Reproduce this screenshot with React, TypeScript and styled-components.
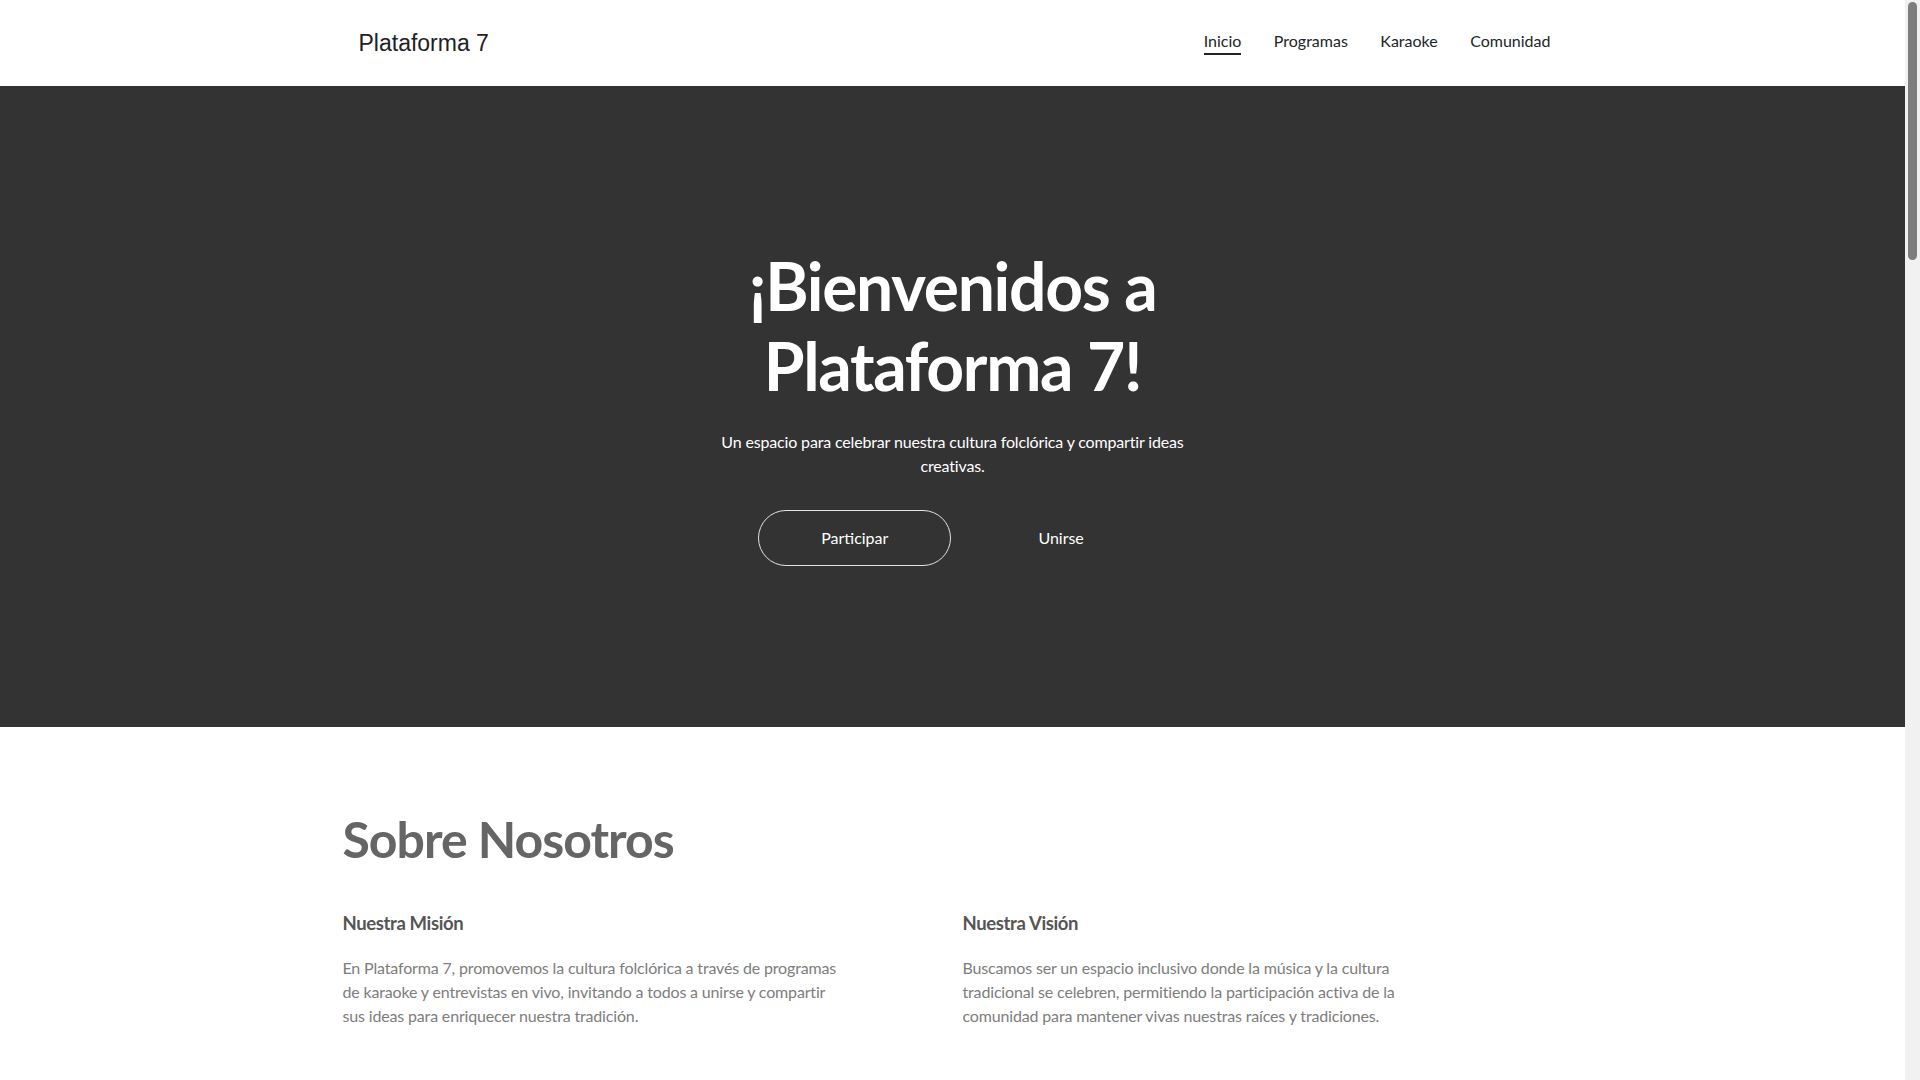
import React from "react";
import styled, { createGlobalStyle } from "styled-components";

const GlobalStyle = createGlobalStyle`
  *, *::before, *::after {
    box-sizing: border-box;
  }
  html {
    background: #f1f1f1;
  }
  body {
    margin: 0 15px 0 0;
    font-family: Lato, "Noto Sans", sans-serif;
    color: #212529;
    background: #fff;
  }
`;

// stands in for the browser scrollbar thumb seen in the reference
const ScrollThumb = styled.div`
  position: fixed;
  top: 2px;
  right: 3px;
  width: 9px;
  height: 258px;
  border-radius: 5px;
  background: #7d7d7d;
`;

const Header = styled.header`
  height: 86px;
  background: #fff;
`;

const NavBar = styled.nav`
  max-width: 1220px;
  height: 100%;
  margin: 0 auto;
  padding: 0 12px 0 16px;
  display: flex;
  align-items: center;
  justify-content: space-between;
`;

const Brand = styled.a`
  font-family: "Liberation Sans", Arial, sans-serif;
  font-size: 23px;
  color: #1d2125;
  text-decoration: none;
`;

const NavList = styled.ul`
  display: flex;
  gap: 32.5px;
  list-style: none;
  margin: 0;
  padding: 0;
`;

const NavLink = styled.a<{ $active?: boolean }>`
  display: block;
  font-size: 16px;
  line-height: 20px;
  padding-bottom: 2px;
  color: #212529;
  text-decoration: none;
  border-bottom: 2px solid ${(p) => (p.$active ? "#212529" : "transparent")};
`;

const Hero = styled.section`
  background: #333333;
  padding: 160px 24px 161px;
  display: flex;
  justify-content: center;
  color: #fff;
  text-align: center;
`;

const HeroInner = styled.div`
  max-width: 500px;
`;

const HeroTitle = styled.h1`
  margin: 0;
  font-size: 66px;
  line-height: 80px;
  font-weight: 700;
  letter-spacing: -0.02em;
`;

const HeroText = styled.p`
  margin: 24px 0 0;
  font-size: 16px;
  line-height: 24px;
  letter-spacing: -0.01em;
`;

const Actions = styled.div`
  display: flex;
  justify-content: center;
  gap: 24px;
  margin-top: 32px;
`;

const HeroButton = styled.a<{ $outline?: boolean }>`
  padding: 15px 62px;
  border: 1px solid ${(p) => (p.$outline ? "#e4e4e4" : "transparent")};
  border-radius: 999px;
  font-size: 16px;
  line-height: 24px;
  color: #fff;
  text-decoration: none;
`;

const Section = styled.section<{ $tone?: string }>`
  padding: 82px 0 80px;
  background: ${(p) => p.$tone || "#fff"};
`;

const Container = styled.div`
  max-width: 1220px;
  margin: 0 auto;
`;

const SectionTitle = styled.h2`
  margin: 0 0 42px;
  font-size: 50px;
  line-height: 60px;
  font-weight: 700;
  letter-spacing: -0.02em;
  color: #656565;
`;

const Columns = styled.div<{ $count?: number }>`
  display: grid;
  grid-template-columns: repeat(${(p) => p.$count || 2}, 1fr);
  gap: 20px;
`;

const ColTitle = styled.h3`
  margin: 0 0 21px;
  font-size: 18.5px;
  line-height: 24px;
  font-weight: 700;
  letter-spacing: -0.02em;
  color: #555;
`;

const ColText = styled.p`
  margin: 0;
  max-width: 498px;
  font-size: 16px;
  line-height: 24px;
  letter-spacing: -0.01em;
  color: #7d7d7d;
`;

const Card = styled.article`
  min-height: 420px;
  padding: 32px;
  border: 1px solid #e5e5e5;
  border-radius: 8px;
`;

const Footer = styled.footer`
  padding: 48px 0;
  background: #333333;
  color: #cfcfcf;
  text-align: center;
  font-size: 14px;
`;

const navItems = ["Inicio", "Programas", "Karaoke", "Comunidad"];

const programas = [
  {
    title: "Entrevistas en vivo",
    text: "Conversaciones con artistas, músicos y portadores de nuestra tradición folclórica.",
  },
  {
    title: "Noches de música",
    text: "Transmisiones semanales con repertorio tradicional y nuevas interpretaciones.",
  },
  {
    title: "Talleres creativos",
    text: "Espacios para aprender, compartir ideas y crear junto a la comunidad.",
  },
];

export default function App() {
  return (
    <>
      <GlobalStyle />
      <ScrollThumb />
      <Header>
        <NavBar>
          <Brand href="#">Plataforma 7</Brand>
          <NavList>
            {navItems.map((item, i) => (
              <li key={item}>
                <NavLink href="#" $active={i === 0}>
                  {item}
                </NavLink>
              </li>
            ))}
          </NavList>
        </NavBar>
      </Header>

      <Hero>
        <HeroInner>
          <HeroTitle>¡Bienvenidos a Plataforma 7!</HeroTitle>
          <HeroText>
            Un espacio para celebrar nuestra cultura folclórica y compartir ideas
            creativas.
          </HeroText>
          <Actions>
            <HeroButton href="#" $outline>
              Participar
            </HeroButton>
            <HeroButton href="#">Unirse</HeroButton>
          </Actions>
        </HeroInner>
      </Hero>

      <Section>
        <Container>
          <SectionTitle>Sobre Nosotros</SectionTitle>
          <Columns>
            <div>
              <ColTitle>Nuestra Misión</ColTitle>
              <ColText>
                En Plataforma 7, promovemos la cultura folclórica a través de
                programas de karaoke y entrevistas en vivo, invitando a todos a
                unirse y compartir sus ideas para enriquecer nuestra tradición.
              </ColText>
            </div>
            <div>
              <ColTitle>Nuestra Visión</ColTitle>
              <ColText>
                Buscamos ser un espacio inclusivo donde la música y la cultura
                tradicional se celebren, permitiendo la participación activa de
                la comunidad para mantener vivas nuestras raíces y tradiciones.
              </ColText>
            </div>
          </Columns>
        </Container>
      </Section>

      <Section $tone="#f6f6f6">
        <Container>
          <SectionTitle>Programas</SectionTitle>
          <Columns $count={3}>
            {programas.map((p) => (
              <Card key={p.title}>
                <ColTitle>{p.title}</ColTitle>
                <ColText>{p.text}</ColText>
              </Card>
            ))}
          </Columns>
        </Container>
      </Section>

      <Section>
        <Container>
          <SectionTitle>Karaoke</SectionTitle>
          <Columns>
            <Card>
              <ColTitle>Canta con nosotros</ColTitle>
              <ColText>
                Elige tu canción favorita del repertorio folclórico y súmate a
                nuestras sesiones de karaoke en vivo.
              </ColText>
            </Card>
            <Card>
              <ColTitle>Próximas sesiones</ColTitle>
              <ColText>
                Consulta el calendario y reserva tu lugar para participar desde
                casa o en el estudio.
              </ColText>
            </Card>
          </Columns>
        </Container>
      </Section>

      <Section $tone="#f6f6f6">
        <Container>
          <SectionTitle>Comunidad</SectionTitle>
          <Columns>
            <Card>
              <ColTitle>Comparte tus ideas</ColTitle>
              <ColText>
                Envíanos propuestas de programas, historias y canciones que
                quieras compartir con todos.
              </ColText>
            </Card>
            <Card>
              <ColTitle>Contacto</ColTitle>
              <ColText>
                Escríbenos y forma parte de la familia de Plataforma 7.
              </ColText>
            </Card>
          </Columns>
        </Container>
      </Section>

      <Footer>© 2024 Plataforma 7. Todos los derechos reservados.</Footer>
    </>
  );
}
